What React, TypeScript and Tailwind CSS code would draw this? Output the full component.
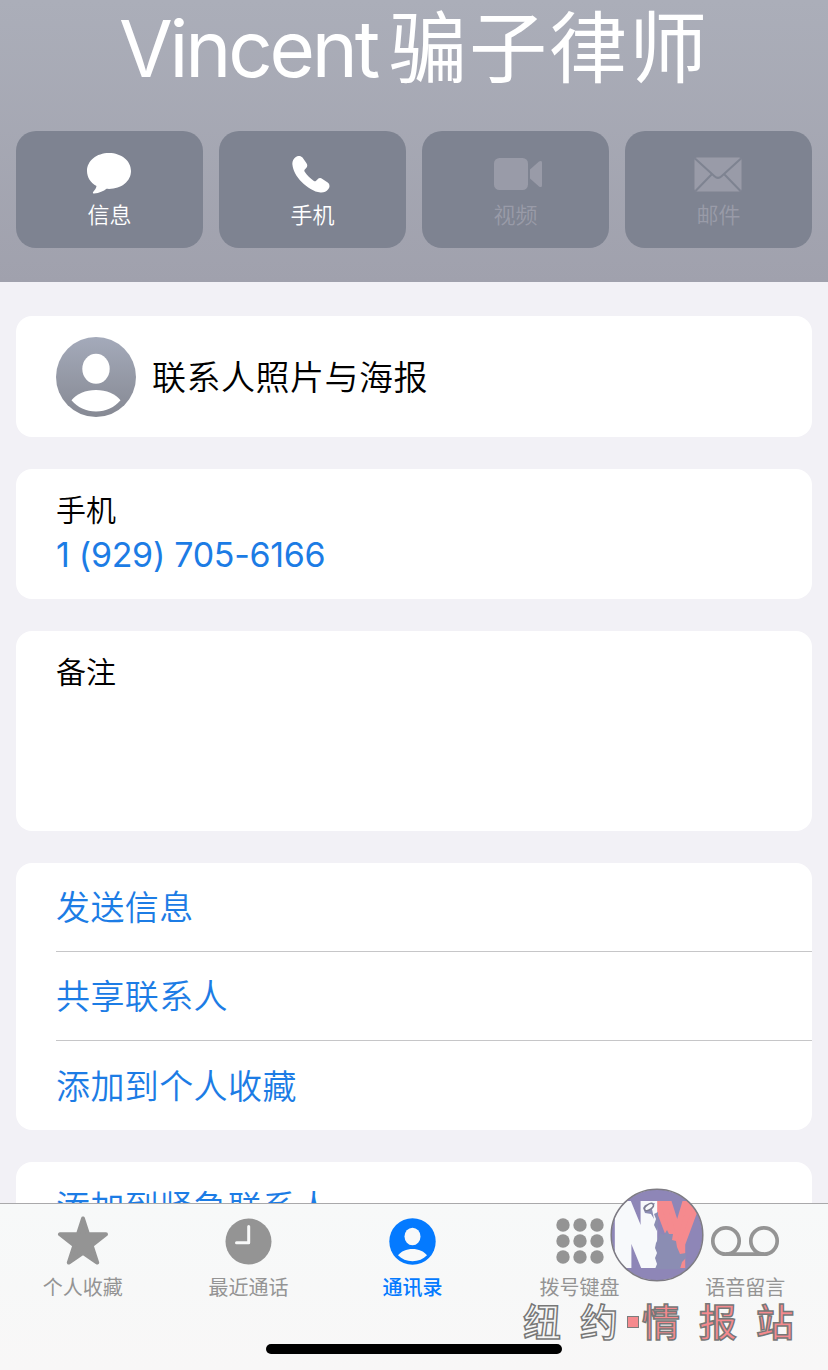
import type { ReactNode } from 'react';

const MessageIcon = () => (
  <svg className="mr-0.5" width="46" height="42" viewBox="0 0 46 42" fill="currentColor">
    <path d="M23 0C10.500 0 1 7.800 1 18c0 6.400 3.600 11.800 9.500 15-.3 2-1.500 4-3.200 5.700-.9 1-.3 2 .9 1.900 5-.4 9.500-2.500 12.300-4.800 .8.100 1.700.1 2.500.1 12.500 0 22-7.800 22-17.900S35.500 0 23 0Z" />
  </svg>
);

const PhoneIcon = () => (
  <svg className="mr-[3px]" width="38" height="38" viewBox="0 0 38 38" fill="currentColor">
    <path d="M3.500 2.300C5.500.6 8.800.300 10.500 2.600l4 5.700c1.200 1.800 1 3.500-.5 5l-1.200 1.300c-.6.700-.6 1.400-.1 2.200 1 1.600 2.500 3.400 4.100 5 1.700 1.600 3.500 3.100 5.100 4.100.8.500 1.500.4 2.200-.2l1.300-1.300c1.600-1.500 3.200-1.700 5-.5l5.300 3.700c2.400 1.700 2.200 4.700.5 6.700-2 2.400-4.500 3.500-7.800 3.200-6.300-.5-13.400-5.200-18.700-10.500C4.300 21.700 1 15.400.4 9.500.1 6.500 1.300 4.100 3.500 2.300Z" />
  </svg>
);

const VideoIcon = () => (
  <svg className="ml-1" width="50" height="34" viewBox="0 0 50 34" fill="currentColor">
    <rect x="1" y="1" width="34" height="32" rx="5.500" />
    <path d="M37 12.500 46 4.600c1.500-1.300 3-.8 3 1.200v22.400c0 2-1.500 2.500-3 1.200L37 21.500Z" />
  </svg>
);

const MailIcon = () => (
  <svg className="mr-0.5" width="48" height="35" viewBox="0 0 48 35">
    <rect x=".5" y=".5" width="47" height="34" rx="2.500" fill="currentColor" />
    <path
      d="M1 1.500 20.500 19.300q3.500 3.200 7 0L47 1.500M1.500 34 17.500 17.500M46.500 34 30.500 17.500"
      fill="none"
      stroke="#7e8391"
      strokeWidth="2"
    />
  </svg>
);

const StarIcon = () => (
  <svg width="52" height="50" viewBox="0 0 52 50" fill="currentColor" stroke="currentColor">
    <path
      strokeWidth="4"
      strokeLinejoin="round"
      d="m26 2.500 5 15.700 18 .1-14.300 11.200L40.200 46.500 26 36.800 11.800 46.500l5.500-17L3 18.300l18-.1Z"
    />
  </svg>
);

const ClockIcon = () => (
  <svg width="47" height="47" viewBox="0 0 47 47">
    <circle cx="23.500" cy="23.500" r="23" fill="currentColor" />
    <path d="M23.700 8.500v16.200H11.500" fill="none" stroke="#f8f9f9" strokeWidth="3" strokeLinecap="round" strokeLinejoin="round" />
  </svg>
);

const PersonIcon = () => (
  <svg width="47" height="47" viewBox="0 0 47 47">
    <circle cx="23.500" cy="23.500" r="23.200" fill="currentColor" />
    <ellipse cx="23.500" cy="18.500" rx="8" ry="8.800" fill="#f8f9f9" />
    <path d="M9 37.200c3-3.900 8.400-6.300 14.500-6.300S35 33.300 38 37.200c-3.700 3.800-8.700 6-14.500 6S12.700 41 9 37.200Z" fill="#f8f9f9" />
  </svg>
);

const KeypadIcon = () => (
  <svg width="48" height="46" viewBox="0 0 48 46" fill="currentColor">
    {[7, 24, 41].map((cx) =>
      [7, 23, 39].map((cy) => <circle key={`${cx}-${cy}`} cx={cx} cy={cy} r="6.700" />),
    )}
  </svg>
);

const VoicemailIcon = () => (
  <svg width="70" height="32" viewBox="0 0 70 32" fill="none" stroke="currentColor" strokeWidth="3.700">
    <circle cx="16" cy="16" r="13.200" />
    <circle cx="54" cy="16" r="13.200" />
    <path d="M16 29.200h38" />
  </svg>
);

const Avatar = () => (
  <svg className="shrink-0" width="80" height="80" viewBox="0 0 80 80">
    <defs>
      <linearGradient id="avatar" x1="0" y1="0" x2="0" y2="1">
        <stop offset="0" stopColor="#a4aaba" />
        <stop offset="1" stopColor="#868993" />
      </linearGradient>
    </defs>
    <circle cx="40" cy="40" r="40" fill="url(#avatar)" />
    <ellipse cx="40" cy="31.800" rx="13.700" ry="15" fill="#fff" />
    <path d="M15.500 63.300C20.500 56.700 29.500 53 40 53s19.500 3.700 24.500 10.300C58.500 70.500 50 74.500 40 74.500s-18.500-4-24.500-11.200Z" fill="#fff" />
  </svg>
);

const NYBadge = () => (
  <svg width="94" height="94" viewBox="0 0 94 94">
    <defs>
      <clipPath id="badge">
        <circle cx="47" cy="47" r="45.500" />
      </clipPath>
    </defs>
    <g clipPath="url(#badge)">
      <rect width="94" height="94" fill="#8e86b7" />
      <g fontFamily="Inter, 'Liberation Sans', sans-serif" fontWeight="900" fontSize="81" strokeWidth="8">
        <text x="46" y="76" textLength="42" lengthAdjust="spacingAndGlyphs" fill="#f58a8e" stroke="#f58a8e">Y</text>
        <text x="5" y="76" textLength="42" lengthAdjust="spacingAndGlyphs" fill="#f7f9fb" stroke="#f7f9fb">N</text>
      </g>
      {/* statue between the letters */}
      <path
        d="m46 55 3-6 1-4 4 2 3-5 2 4h4l-1 6 4 1 1 6 3 7 6-1v5l-4 4-2 7H45l2-5-2-6 2-5-2-5Z"
        fill="#8b8db3"
      />
      <path d="m44 26 2 5-2 6 3 6 1-4V24Z" fill="#8b8db3" />
      <path d="m33 20 2-3 10-2-3 6 2 10-3-5-6-1Z" fill="#8b8db3" />
      <ellipse cx="39" cy="19" rx="5" ry="2.700" transform="rotate(-35 39 19)" fill="#f7f9fb" stroke="#7d7d91" strokeWidth="1.500" />
    </g>
    <circle cx="47" cy="47" r="45.800" fill="none" stroke="#7d7b83" strokeWidth="1.500" />
  </svg>
);

const actions = [
  { label: '信息', icon: <MessageIcon />, enabled: true },
  { label: '手机', icon: <PhoneIcon />, enabled: true },
  { label: '视频', icon: <VideoIcon />, enabled: false },
  { label: '邮件', icon: <MailIcon />, enabled: false },
];

const links = ['发送信息', '共享联系人', '添加到个人收藏'];

const tabs = [
  { label: '个人收藏', icon: <StarIcon />, active: false },
  { label: '最近通话', icon: <ClockIcon />, active: false },
  { label: '通讯录', icon: <PersonIcon />, active: true },
  { label: '拨号键盘', icon: <KeypadIcon />, active: false },
  { label: '语音留言', icon: <VoicemailIcon />, active: false },
];

function Card({ className = '', children }: { className?: string; children: ReactNode }) {
  return <section className={`shrink-0 rounded-2xl bg-white pl-10 ${className}`}>{children}</section>;
}

function Watermark() {
  return (
    <div className="pointer-events-none absolute left-[523px] top-[1188px] w-[275px]">
      <div className="ml-[87px]">
        <NYBadge />
      </div>
      <div className="mt-[15px] flex items-center text-[38px] leading-[50px] font-medium text-[#f5f5f5] [-webkit-text-stroke:1.500px_#777777]">
        <span className="w-[57px]">纽</span>
        <span className="w-[47px]">约</span>
        <span className="mr-[3px] size-3 border-[1.5px] border-[#7c7c7c] bg-[#f58a8e]" />
        <span className="w-[57px] text-[#f58a8e]">情</span>
        <span className="w-[57px] text-[#f58a8e]">报</span>
        <span className="text-[#f58a8e]">站</span>
      </div>
    </div>
  );
}

export default function App() {
  return (
    <div
      lang="zh-CN"
      className="relative flex h-[1370px] w-[828px] flex-col overflow-hidden bg-[#f2f1f6] font-[Inter,'Noto_Sans_CJK_SC',sans-serif] text-black"
    >
      <header className="h-[282px] shrink-0 bg-linear-to-b from-[#abaeb9] to-[#a0a1ad] px-4">
        <h1 className="flex h-[131px] items-start justify-center gap-3 pt-px text-[78px] leading-[96px] whitespace-nowrap text-white">
          <span className="tracking-[-3.2px]">Vincent</span>
          <span className="tracking-[2px]">骗子律师</span>
        </h1>
        <div className="grid grid-cols-4 gap-4">
          {actions.map((a) => (
            <button
              key={a.label}
              className={`flex h-[117px] flex-col items-center rounded-[20px] bg-[#7e8391] pt-[21px] ${a.enabled ? 'text-white' : 'text-[#999ba8]'}`}
            >
              <span className="flex h-[44px] items-center">{a.icon}</span>
              <span className="mt-[3px] text-[22px] leading-8 font-[350]">{a.label}</span>
            </button>
          ))}
        </div>
      </header>

      <main className="flex min-h-0 flex-1 flex-col gap-8 overflow-hidden px-4 pt-[34px]">
        <Card className="flex h-[121px] items-center gap-4">
          <Avatar />
          <span className="pt-px text-[34px] font-[350] tracking-[0.5px]">联系人照片与海报</span>
        </Card>

        <Card className="h-[130px] pt-[18px]">
          <p className="text-[30px] leading-[46px] font-[350]">手机</p>
          <p className="text-[34px] leading-[44px] tracking-[-0.3px] text-[#1c7ce5]">1 (929) 705-6166</p>
        </Card>

        <Card className="h-[200px] pt-[18px]">
          <p className="text-[30px] leading-[46px] font-[350]">备注</p>
        </Card>

        <Card className="h-[267px] divide-y divide-[#c6c6c8]">
          {links.map((label) => (
            <div key={label} className="flex h-[89px] items-center pt-px text-[34px] font-[350] tracking-[0.4px] text-[#1c7ce5]">
              {label}
            </div>
          ))}
        </Card>

        <Card className="flex h-[89px] items-center pt-0.5 text-[34px] font-[350] tracking-[0.4px] text-[#1c7ce5]">
          添加到紧急联系人
        </Card>
      </main>

      <nav className="flex h-[167px] shrink-0 flex-col items-center border-t border-[#a9a9ab] bg-linear-to-b from-[#f7f9f9] to-[#f8f7f7]">
        <div className="grid w-full grid-cols-5">
          {tabs.map((t) => (
            <div
              key={t.label}
              className={`flex flex-col items-center pt-[11px] ${t.active ? 'pr-[3px] font-medium text-[#047aff]' : 'text-[#949494]'}`}
            >
              <span className="flex h-[52px] items-center">{t.icon}</span>
              <span className="mt-1.5 text-[20px] leading-[30px]">{t.label}</span>
            </div>
          ))}
        </div>
        <div className="mt-[41px] h-2.5 w-[296px] rounded-full bg-black" />
      </nav>

      <Watermark />
    </div>
  );
}
